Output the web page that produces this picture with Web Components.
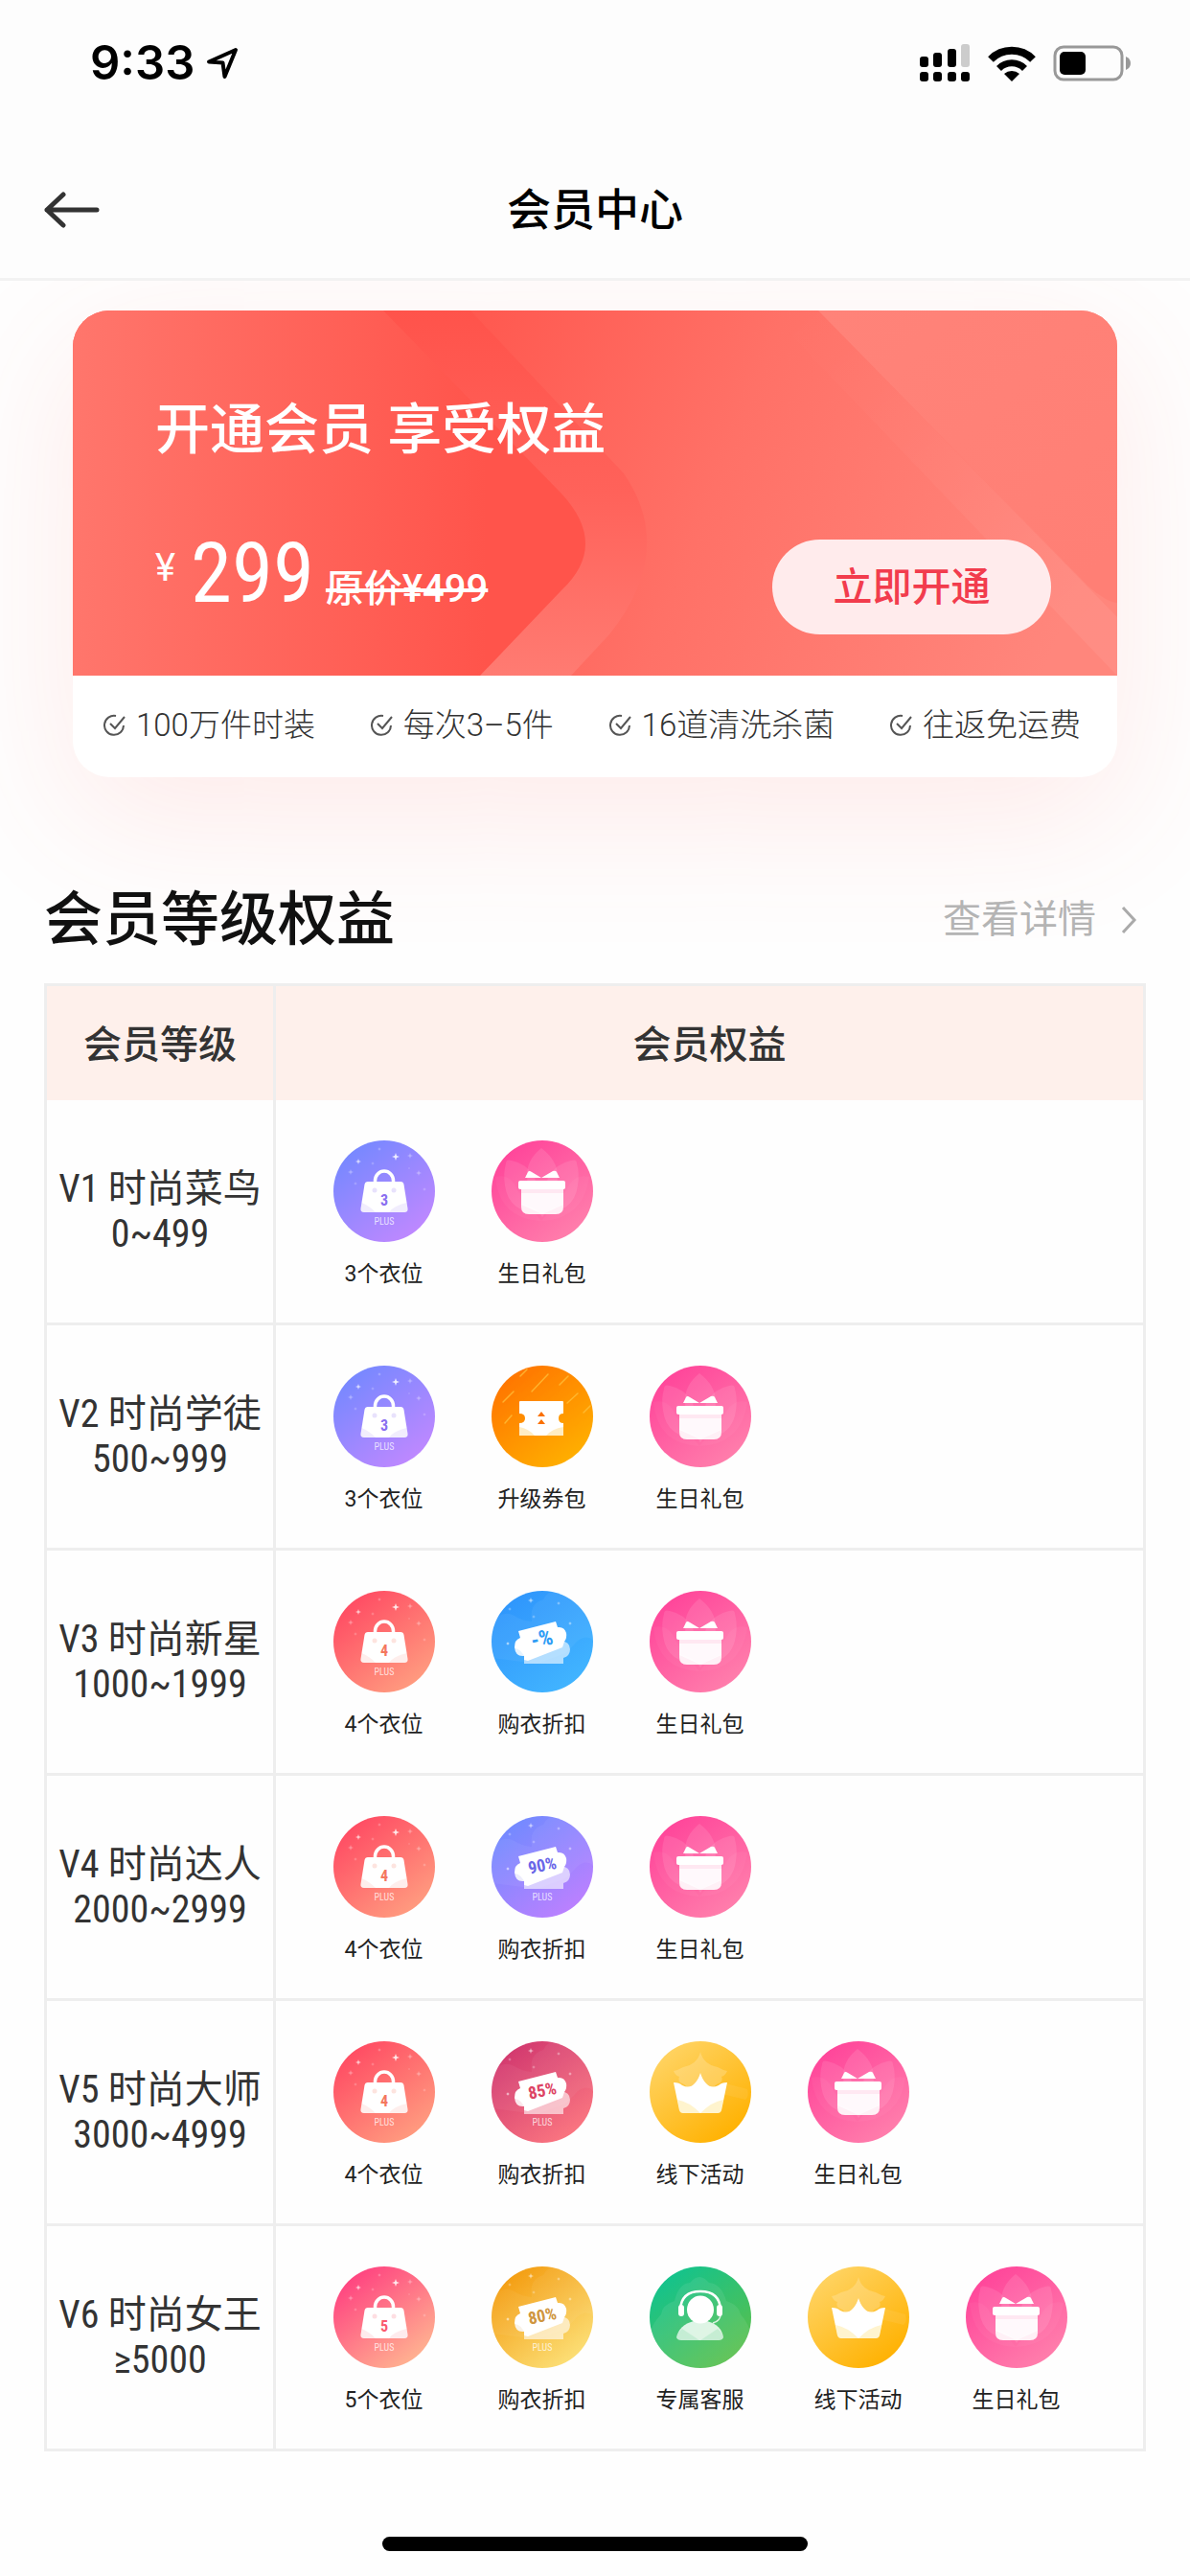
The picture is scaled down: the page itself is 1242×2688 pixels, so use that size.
<!DOCTYPE html>
<html lang="zh-CN">
<head>
<meta charset="utf-8">
<meta name="viewport" content="width=device-width, initial-scale=1">
<title>会员中心</title>
<style>
    html {
        --font-cjk: Roboto, 'Noto Sans CJK SC', sans-serif;
        --font-condensed: 'Roboto Condensed', Roboto, 'Noto Sans CJK SC', sans-serif;
        --color-text: #333333;
        --color-line: #eeeeee;
    }

    body {
        margin: 0;
        min-height: 100vh;
        display: flex;
        flex-direction: column;
        overflow-x: hidden;
        background: #fefefe;
        color: var(--color-text);
        font-family: var(--font-cjk);
    }

    header {
        position: relative;
        z-index: 1;
        background: #fdfdfd;
        border-bottom: 3px solid #f2f2f2;
    }

    main {
        flex: 1;
    }
</style>
</head>
<body>

<template id="template-status">
    <time>9:33</time>
    <svg class="location" width="34" height="34" viewBox="0 0 34 34">
        <path d="M31 3 L3 15.500 L17.500 16.500 L19.500 31 Z" fill="none" stroke="#000" stroke-width="4" stroke-linejoin="round"/>
    </svg>
    <svg class="signal" width="52" height="40" viewBox="0 0 52 40">
        <rect x="0" y="13" width="9" height="11" rx="3"/>
        <rect x="14" y="9" width="9" height="15" rx="3"/>
        <rect x="29" y="5" width="9" height="19" rx="3"/>
        <rect x="43" y="0" width="9" height="24" rx="3" fill="#ccc"/>
        <rect x="0" y="29" width="9" height="10" rx="3"/>
        <rect x="14" y="29" width="9" height="10" rx="3"/>
        <rect x="29" y="29" width="9" height="10" rx="3"/>
        <rect x="43" y="29" width="9" height="10" rx="3"/>
    </svg>
    <svg class="wifi" width="50" height="37" viewBox="0 0 50 37">
        <path d="M3 14 A31 31 0 0 1 47 14" fill="none" stroke="#000" stroke-width="8"/>
        <path d="M11.500 23.500 A19 19 0 0 1 38.500 23.500" fill="none" stroke="#000" stroke-width="7"/>
        <path d="M17 29 A12 12 0 0 1 33 29 L25 37 Z"/>
    </svg>
    <svg class="battery" width="82" height="38" viewBox="0 0 82 38">
        <rect x="2" y="2" width="70" height="34" rx="9" fill="none" stroke="#999" stroke-width="3"/>
        <rect x="7" y="7" width="27" height="24" rx="5"/>
        <path d="M76 12 Q81 14 81 19 Q81 24 76 26 Z" fill="#999"/>
    </svg>
    <style>
        :host {
            display: flex;
            align-items: center;
            padding: 36px 61px 52px 94px;
            color: #000;
        }

        time {
            font: 600 49px/60px Inter, sans-serif;
            margin-right: 12px;
        }

        .signal {
            margin-left: auto;
        }

        .wifi {
            margin: 0 18px 0 19px;
        }
    </style>
</template>

<template id="template-nav">
    <button type="button" aria-label="返回">
        <svg width="58" height="38" viewBox="0 0 58 38" fill="none" stroke="#333" stroke-width="5" stroke-linecap="round" stroke-linejoin="round">
            <path d="M20 3 L3 19 L20 35 M3 19 H55"/>
        </svg>
    </button>
    <h1><slot></slot></h1>
    <style>
        :host {
            display: grid;
            grid-template-columns: 58px 1fr 58px;
            align-items: center;
            height: 142px;
            padding: 0 46px;
        }

        button {
            display: flex;
            padding: 0;
            border: 0;
            background: none;
        }

        h1 {
            margin: 0;
            text-align: center;
            font-size: 46px;
            line-height: 60px;
            font-weight: 500;
            color: #000;
        }
    </style>
</template>

<template id="template-card">
    <div class="banner">
        <svg class="art" viewBox="0 0 1090 381" preserveAspectRatio="none" aria-hidden="true">
            <defs>
                <linearGradient id="left" x1="0" x2="480" y1="0" y2="0" gradientUnits="userSpaceOnUse">
                    <stop offset="0" stop-color="#ff766c"/>
                    <stop offset=".9" stop-color="#ff544b"/>
                </linearGradient>
                <linearGradient id="right" x1="400" y1="0" x2="1060" y2="260" gradientUnits="userSpaceOnUse">
                    <stop offset="0" stop-color="#ff574e"/>
                    <stop offset=".45" stop-color="#ff7167"/>
                    <stop offset="1" stop-color="#ff867c"/>
                </linearGradient>
                <linearGradient id="band" x1="0" y1="0" x2="0" y2="1">
                    <stop offset="0" stop-color="#ff534b"/>
                    <stop offset=".5" stop-color="#ff625a"/>
                    <stop offset="1" stop-color="#ff7b72"/>
                </linearGradient>
                <linearGradient id="beam" x1="740" y1="0" x2="1060" y2="340" gradientUnits="userSpaceOnUse">
                    <stop offset="0" stop-color="#fff" stop-opacity="0"/>
                    <stop offset="1" stop-color="#fff" stop-opacity=".06"/>
                </linearGradient>
                <linearGradient id="corner" x1="780" y1="0" x2="1060" y2="280" gradientUnits="userSpaceOnUse">
                    <stop offset="0" stop-color="#ff8379"/>
                    <stop offset="1" stop-color="#ff7f75"/>
                </linearGradient>
            </defs>
            <rect width="1090" height="381" fill="url(#right)"/>
            <path d="M324 0 H415 L575 170 Q630 250 560 338 L520 381 H400 Z" fill="url(#band)"/>
            <path d="M0 0 H324 L510 191 Q560 245 510 292 L425 381 H0 Z" fill="url(#left)"/>
            <path d="M725 0 H778 L1090 320 V381 Z" fill="url(#beam)"/>
            <path d="M778 0 H1090 V305 Q1080 305 1060 288 Z" fill="url(#corner)"/>
        </svg>
        <div class="content">
            <h2>开通会员 享受权益</h2>
            <div class="offer">
                <p><span class="yen">¥</span><strong>299</strong><s>原价¥499</s></p>
                <button type="button">立即开通</button>
            </div>
        </div>
    </div>
    <ul></ul>
    <style>
        :host {
            display: block;
            margin: 31px 76px 0;
            border-radius: 38px;
            background: #fff;
            box-shadow: 0 40px 150px rgba(255, 84, 75, .12);
        }

        .banner {
            display: grid;
            border-radius: 38px 38px 0 0;
            overflow: hidden;
            color: #fff;
        }

        .art, .content {
            grid-area: 1 / 1;
        }

        .art {
            width: 100%;
            height: 100%;
            min-height: 0;
            contain: size;
        }

        .content {
            padding: 85px 69px 43px 86px;
        }

        h2 {
            margin: 0 0 74px;
            font-size: 57px;
            line-height: 80px;
            font-weight: 500;
        }

        .offer {
            display: flex;
            justify-content: space-between;
            align-items: flex-start;
        }

        p {
            display: flex;
            align-items: baseline;
            margin: 0;
            line-height: 60px;
        }

        .yen {
            align-self: flex-start;
            font-size: 40px;
            margin-right: 16px;
        }

        strong {
            font: 400 87px/70px var(--font-condensed);
            margin-right: 12px;
        }

        s {
            font-size: 40px;
            font-weight: 500;
        }

        button {
            width: 291px;
            height: 99px;
            padding: 0;
            border: 0;
            border-radius: 50px;
            background: #ffebec;
            color: #f23c4d;
            font: 500 41px/60px var(--font-cjk);
        }

        ul {
            display: flex;
            justify-content: space-between;
            margin: 0;
            padding: 27px 38px 29px 32px;
            list-style: none;
            font-size: 33px;
            line-height: 50px;
            font-weight: 300;
            color: #333;
        }

        li {
            display: flex;
            align-items: center;
            gap: 10px;
        }
    </style>
</template>

<template id="template-section">
    <h2><slot name="title"></slot></h2>
    <a href="#levels">
        <slot name="more"></slot>
        <svg width="18" height="30" viewBox="0 0 18 30" fill="none" stroke="#aaa" stroke-width="3">
            <path d="M2 2 L14 15 L2 28"/>
        </svg>
    </a>
    <style>
        :host {
            display: flex;
            justify-content: space-between;
            align-items: center;
            margin: 107px 54px 24px 46px;
        }

        h2 {
            margin: 0;
            font-size: 61px;
            line-height: 84px;
            font-weight: 500;
            color: #111;
        }

        a {
            display: flex;
            align-items: center;
            gap: 26px;
            font-size: 40px;
            line-height: 60px;
            color: #b4b4b4;
            text-decoration: none;
        }
    </style>
</template>

<template id="template-levels">
    <table id="levels">
        <thead>
            <tr><th scope="col">会员等级</th><th scope="col">会员权益</th></tr>
        </thead>
        <tbody></tbody>
    </table>
    <style>
        :host {
            display: block;
            margin: 0 46px;
        }

        table {
            width: 100%;
            table-layout: fixed;
            border-collapse: collapse;
            border: 3px solid var(--color-line);
        }

        th, td {
            padding: 0;
            border-right: 3px solid var(--color-line);
        }

        thead th {
            height: 115px;
            padding-bottom: 4px;
            background: #fef0eb;
            font-size: 40px;
            font-weight: 500;
            text-align: center;
        }

        thead th:first-child {
            width: 236px;
        }

        tbody tr + tr {
            border-top: 3px solid var(--color-line);
        }

        tbody th {
            font: 400 40px/47px var(--font-condensed);
            text-align: center;
        }

        tbody th span {
            display: block;
            white-space: nowrap;
        }

        .perks {
            display: flex;
            padding: 42px 0 35px 30px;
        }
    </style>
</template>

<template id="template-perk">
    <figure>
        <svg width="106" height="106" viewBox="0 0 106 106" aria-hidden="true"></svg>
        <figcaption><slot></slot></figcaption>
    </figure>
    <style>
        :host {
            display: block;
            flex: 0 1 165px;
        }

        figure {
            display: flex;
            flex-direction: column;
            align-items: center;
            margin: 0;
        }

        figcaption {
            margin-top: 19px;
            font-size: 23px;
            line-height: 30px;
            color: #222;
            white-space: nowrap;
        }

        text {
            font-family: var(--font-condensed);
            text-anchor: middle;
        }
    </style>
</template>

<template id="template-home">
    <span></span>
    <style>
        :host {
            display: flex;
            justify-content: center;
            padding: 26px 0;
        }

        span {
            width: 444px;
            height: 15px;
            border-radius: 8px;
            background: #000;
        }
    </style>
</template>

<header>
    <vip-status></vip-status>
    <vip-nav>会员中心</vip-nav>
</header>
<main>
    <vip-card></vip-card>
    <vip-section>
        <span slot="title">会员等级权益</span>
        <span slot="more">查看详情</span>
    </vip-section>
    <vip-levels></vip-levels>
</main>
<vip-home></vip-home>

<script>
    class VipElement extends HTMLElement {
        constructor(template) {
            super();
            this.shadow = this.attachShadow({ mode: 'open' });
            this.shadow.appendChild(document.getElementById(template).content.cloneNode(true));
        }
    }

    // background sparkles
    const star = (x, y, r, o) => `<path d="M${x} ${y - r} L${x + r / 4} ${y - r / 4} L${x + r} ${y} L${x + r / 4} ${y + r / 4} L${x} ${y + r} L${x - r / 4} ${y + r / 4} L${x - r} ${y} L${x - r / 4} ${y - r / 4} Z" fill="#fff" opacity="${o}"/>`;
    const stars = list => list.map(s => star(...s)).join('');
    const plus = '<text x="53" y="88" font-size="10" fill="#fff" fill-opacity=".75">PLUS</text>';

    const bag = (digit, color) => `
        ${stars([[65, 17, 4, .85], [26, 22, 3, .7], [18, 33, 3, .35], [80, 16, 3, .35], [89, 34, 3, .35], [48, 9, 2, .35], [41, 24, 2, .3], [23, 45, 2, .3], [95, 51, 2, .3], [79, 29, 1, .4]])}
        <path d="M43.500 44 V42 A9.500 10 0 0 1 62.500 42 V44" fill="none" stroke="#fff" stroke-width="3.500"/>
        <path d="M36 43 H70 Q73 43 73.500 46 L77.500 71 Q78 75 74 75 H32 Q28 75 28.500 71 L32.500 46 Q33 43 36 43 Z" fill="#fff"/>
        <path d="M29.500 65 Q37 68 44 75 H32 Q28 75 28.500 71 Z M76.500 65 Q63 68 58 75 H74 Q78 75 77.500 71 Z" fill="${color}" opacity=".12"/>
        <circle cx="43" cy="52" r="2.500" fill="${color}" opacity=".2"/>
        <circle cx="63" cy="52" r="2.500" fill="${color}" opacity=".2"/>
        <text x="53" y="68" font-size="16" font-weight="700" fill="${color}">${digit}</text>
        ${plus}`;

    const voucher = (label, color, size) => `
        <path d="M0 35 Q9 19 24 26 Q31 31 42 32 Q39 13 54 9 Q58 0 68 0 H106 V106 H76 Q106 96 106 51 Q98 45 89 53 Q82 61 77 65 L48 76 L0 70 Z" fill="#fff" opacity=".05"/>
        ${stars([[41, 10, 3, .6], [70, 13, 2, .5], [19, 19, 2, .4], [44, 27, 2, .4], [82, 34, 2, .6], [17, 55, 2, .8]])}
        <path d="M34 67 L72 52 Q82 53 82 61 Q82 68 75 70 V76 H34 V70 Z" fill="#fff" opacity=".6"/>
        <path d="M28 42 L67 32 L69 38 Q76 37 78 44 Q79 49 76 53 L74 59 L38 73 L34 72 L34 68 Q25 69 24 59 Q24 51 30 49 Z" fill="#fff"/>
        <path d="M24 60 Q31 60 36 72 L34 68 Q26 69 24 60 Z" fill="${color}" opacity=".12"/>
        <g transform="rotate(-12 52 52)"><text x="53" y="58" font-size="${size}" font-weight="700" fill="${color}">${label}</text></g>`;

    const gift = `
        <path d="M52 8 Q37 20 37 36 Q37 58 53 80 Q69 58 69 36 Q68 20 52 8 Z" fill="#fff" opacity=".11"/>
        <path d="M15 24 Q15 19 21 21 Q36 24 45 38 L52 76 Q18 76 14 47 Q12 35 15 24 Z" fill="#fff" opacity=".1"/>
        <path d="M89 24 Q89 19 83 21 Q68 24 59 38 L52 76 Q86 76 90 47 Q92 35 89 24 Z" fill="#fff" opacity=".1"/>
        <path d="M4 38 Q20 34 27 52 L52 84 Q8 82 4 38 Z M102 38 Q86 34 78 52 L52 84 Q96 82 102 38 Z" fill="#fff" opacity=".04"/>
        <path d="M35 39 L38 33 Q39 31 42 33 L52 39 L64 32 Q67 31 68 33 L71 39 Z" fill="#fff"/>
        <rect x="28" y="42" width="49" height="9" rx="2" fill="#fff"/>
        <path d="M31 51 H75 V69 Q75 77 67 77 H39 Q31 77 31 69 Z" fill="#ffe8f2"/>
        <path d="M31 55 H75 V67 L53 77 L31 67 Z" fill="#fff" opacity=".75"/>
        <path d="M31 66 Q42 68 53 77 H39 Q31 77 31 69 Z M75 66 Q64 70 53 77 H67 Q75 77 75 69 Z" fill="#fff" opacity=".35"/>`;

    const crown = `
        <path d="M53 11 Q56 24 71 27 Q76 30 81 31 Q79 36 75 37 Q78 42 70 45 L53 60 L36 45 Q28 42 31 37 Q27 36 25 31 Q30 30 35 27 Q50 24 53 11 Z" fill="#fff" opacity=".2"/>
        <path d="M76 43 L102 50 Q104 58 100 61 L76 55 Z" fill="#fff" opacity=".07"/>
        <path d="M25 43 Q31 43 34 46 Q42 50 47 44 Q51 40 53 33 Q55 40 59 44 Q64 50 72 46 Q75 43 81 43 L75 72 Q74 75 71 75 H35 Q32 75 31 72 Z" fill="#fff"/>
        <path d="M29 61 Q41 63 53 75 H35 Q32 75 31 72 Z M77 61 Q65 63 53 75 H71 Q74 75 75 72 Z" fill="#ffd95c" opacity=".3"/>`;

    const coupon = `
        <g stroke="#ffc23c" stroke-width="1.500" stroke-linecap="round" opacity=".75">
            <path d="M30 11 L37 4 M42 27 L59 9 M71 20 L80 11 M12 38 L23 27 M14 60 L21 52 M79 39 L90 29 M96 49 L103 42"/>
        </g>
        <path d="M29 38 Q29 37 30 37 H74 Q75 37 75 38 V50 Q70 50 70 55 Q70 60 75 60 V73 H29 V60 Q35 60 35 55 Q35 50 29 50 Z" fill="#fff"/>
        <path d="M29 64 Q39 66 45 73 H29 Z M75 64 Q63 66 57 73 H75 Z" fill="#ffc23c" opacity=".3"/>
        <path d="M52 48 L56 53 H48 Z M52 56 L56 61 H48 Z" fill="#fa7000"/>`;

    const service = `
        <path d="M12 50 Q13 40 26 36 Q30 18 42 17 Q52 5 62 17 Q75 18 80 36 Q93 40 95 50 Q104 60 106 72 V106 H0 V72 Q2 60 12 50 Z" fill="#fff" opacity=".08"/>
        <path d="M32 45 Q33 26 53 26 Q73 26 74 45" fill="none" stroke="#fff" stroke-width="2.500"/>
        <rect x="30" y="40" width="6" height="12" rx="3" fill="#fff"/>
        <rect x="70" y="40" width="6" height="12" rx="3" fill="#fff"/>
        <path d="M74 50 Q74 57 66 59" fill="none" stroke="#fff" stroke-width="1.500" opacity=".8"/>
        <path d="M46 57 H60 Q75 61 77 74 Q76 77 72 77 H33 Q29 77 28 74 Q31 61 46 57 Z" fill="#fff" opacity=".82"/>
        <path d="M28 74 Q30 68 34 65 L52 77 H33 Q29 77 28 74 Z M77 74 Q75 68 71 65 L53 77 H72 Q76 77 77 74 Z" fill="#38c172" opacity=".15"/>
        <ellipse cx="53" cy="45" rx="14" ry="14.500" fill="#fff"/>`;

    const icons = {
        bag3: ['#7688ff', '#c088ff', bag(3, '#8a6ff0')],
        bag4: ['#ff4b63', '#ff9d80', bag(4, '#f4775f')],
        bag5: ['#ff4280', '#ffb491', bag(5, '#fa5a6e')],
        percent: ['#2f96fc', '#42b5ff', voucher('-%', '#2f9df5', 23)],
        off90: ['#728aff', '#bd80ff', voucher('90%', '#6a66e8', 18) + plus],
        off85: ['#d2396f', '#fb7781', voucher('85%', '#dd4464', 18) + plus],
        off80: ['#f49d11', '#fce078', voucher('80%', '#cf9640', 18) + plus],
        gift: ['#ff459a', '#ff7fac', gift],
        crown: ['#ffd362', '#ffb100', crown],
        coupon: ['#ff7600', '#ffb000', coupon],
        service: ['#13c38d', '#5abf4b', service]
    };

    const levels = [
        ['V1 时尚菜鸟', '0~499', [['bag3', '3个衣位'], ['gift', '生日礼包']]],
        ['V2 时尚学徒', '500~999', [['bag3', '3个衣位'], ['coupon', '升级券包'], ['gift', '生日礼包']]],
        ['V3 时尚新星', '1000~1999', [['bag4', '4个衣位'], ['percent', '购衣折扣'], ['gift', '生日礼包']]],
        ['V4 时尚达人', '2000~2999', [['bag4', '4个衣位'], ['off90', '购衣折扣'], ['gift', '生日礼包']]],
        ['V5 时尚大师', '3000~4999', [['bag4', '4个衣位'], ['off85', '购衣折扣'], ['crown', '线下活动'], ['gift', '生日礼包']]],
        ['V6 时尚女王', '≥5000', [['bag5', '5个衣位'], ['off80', '购衣折扣'], ['service', '专属客服'], ['crown', '线下活动'], ['gift', '生日礼包']]]
    ];

    customElements.define('vip-status', class extends VipElement {
        constructor() {
            super('template-status');
        }
    });

    customElements.define('vip-nav', class extends VipElement {
        constructor() {
            super('template-nav');
        }
    });

    customElements.define('vip-card', class extends VipElement {
        constructor() {
            super('template-card');
            const check = '<svg width="24" height="24" viewBox="0 0 24 24" fill="none" stroke="#555" stroke-width="2"><path d="M13 2 A10 10 0 1 0 21 12 M7 10 L12 15 L22 3"/></svg>';
            this.shadow.querySelector('ul').innerHTML = ['100万件时装', '每次3–5件', '16道清洗杀菌', '往返免运费']
                .map(text => `<li>${check}<span>${text}</span></li>`).join('');
        }
    });

    customElements.define('vip-section', class extends VipElement {
        constructor() {
            super('template-section');
        }
    });

    customElements.define('vip-perk', class extends VipElement {
        constructor() {
            super('template-perk');
        }
        static get observedAttributes() {
            return ['icon'];
        }
        attributeChangedCallback(name, oldValue, newValue) {
            const [from, to, art] = icons[newValue];
            this.shadow.querySelector('svg').innerHTML = `
                <defs>
                    <linearGradient id="bg" x1=".15" y1=".1" x2=".8" y2=".95">
                        <stop offset="0" stop-color="${from}"/>
                        <stop offset="1" stop-color="${to}"/>
                    </linearGradient>
                    <clipPath id="disc"><circle cx="53" cy="53" r="53"/></clipPath>
                </defs>
                <g clip-path="url(#disc)"><rect width="106" height="106" fill="url(#bg)"/>${art}</g>`;
        }
    });

    customElements.define('vip-levels', class extends VipElement {
        constructor() {
            super('template-levels');
            this.shadow.querySelector('tbody').innerHTML = levels.map(([name, range, perks]) => `
                <tr>
                    <th scope="row"><span>${name}</span><span>${range}</span></th>
                    <td><div class="perks">${perks.map(([icon, text]) => `<vip-perk icon="${icon}">${text}</vip-perk>`).join('')}</div></td>
                </tr>`).join('');
        }
    });

    customElements.define('vip-home', class extends VipElement {
        constructor() {
            super('template-home');
        }
    });
</script>
</body>
</html>
